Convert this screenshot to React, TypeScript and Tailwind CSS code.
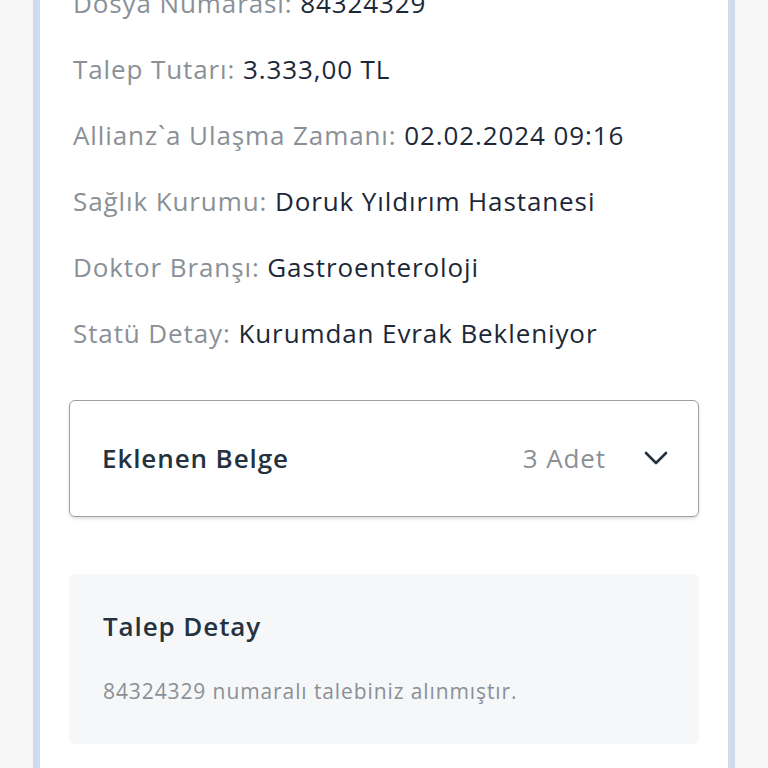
const rows = [
  { label: 'Dosya Numarası:', value: '84324329' },
  { label: 'Talep Tutarı:', value: '3.333,00 TL' },
  { label: 'Allianz`a Ulaşma Zamanı:', value: '02.02.2024 09:16' },
  { label: 'Sağlık Kurumu:', value: 'Doruk Yıldırım Hastanesi' },
  { label: 'Doktor Branşı:', value: 'Gastroenteroloji' },
  { label: 'Statü Detay:', value: 'Kurumdan Evrak Bekleniyor' },
];

export default function App() {
  return (
    <div className="h-[768px] overflow-hidden bg-[#f6f6f6] px-[33px] font-['Open_Sans',sans-serif] tracking-[0.9px]">
      <div className="-mt-[13px] border-x-[7px] border-[#cfdcee] bg-white px-[29px] pb-20">
        {/* Detail rows */}
        <div className="flex flex-col gap-[34px] pl-[4px]">
          {rows.map((r) => (
            <p key={r.label} className="text-[26px] leading-[32px]">
              <span className="text-[#8a9096]">{r.label} </span>
              <span className="text-[#1c2838]">{r.value}</span>
            </p>
          ))}
        </div>

        {/* Documents accordion */}
        <div className="mt-[51px] flex h-[117px] items-center rounded-md border border-[#9aa0a6] pl-[32px] pr-[30px] shadow-[0_2px_3px_rgba(0,0,0,0.12)]">
          <span className="flex-1 text-[26px] font-semibold text-[#243240]">Eklenen Belge</span>
          <span className="text-[26px] text-[#8a9096]">3 Adet</span>
          <svg className="ml-[38px]" width="24" height="15" viewBox="0 0 24 15" fill="none">
            <polyline points="2,2 12,12 22,2" stroke="#243240" strokeWidth="2.6" strokeLinecap="round" strokeLinejoin="round" />
          </svg>
        </div>

        {/* Request detail */}
        <div className="mt-[57px] h-[170px] rounded-md bg-[#f6f7f8] px-[34px] pt-[36px]">
          <h2 className="text-[26px] font-semibold leading-[32px] text-[#243240]">Talep Detay</h2>
          <p className="mt-[34px] text-[21px] text-[#8a9096]">84324329 numaralı talebiniz alınmıştır.</p>
        </div>
      </div>
    </div>
  );
}
